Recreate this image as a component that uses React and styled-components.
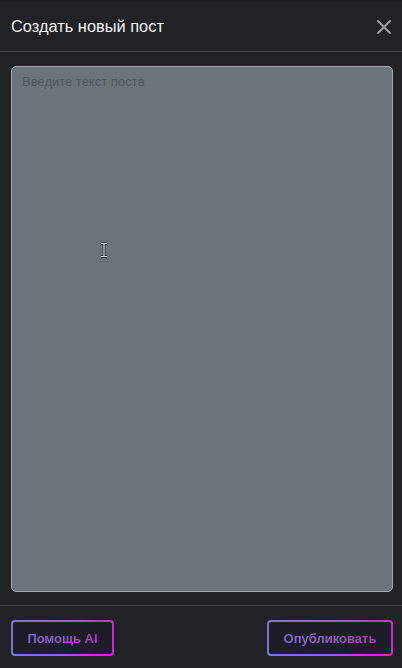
import React from "react";
import styled, { createGlobalStyle } from "styled-components";

const GlobalStyle = createGlobalStyle`
  html, body {
    margin: 0;
    padding: 0;
    background: #212226;
  }
  * {
    box-sizing: border-box;
  }
`;

const Modal = styled.div`
  width: 402px;
  height: 668px;
  display: flex;
  flex-direction: column;
  background: #212226;
  font-family: "Liberation Sans", Arial, sans-serif;
  border-top: 2px solid #1b1c1f;
`;

const Header = styled.div`
  height: 50px;
  display: flex;
  align-items: center;
  justify-content: space-between;
  padding: 0 8px 0 11px;
  border-bottom: 1px solid #4a4b50;
`;

const Title = styled.h2`
  margin: 0;
  font-size: 16.4px;
  font-weight: 400;
  color: #f2f2f2;
`;

const CloseButton = styled.button`
  width: 20px;
  height: 20px;
  padding: 0;
  border: none;
  background: transparent;
  display: flex;
  align-items: center;
  justify-content: center;
  cursor: pointer;
`;

const Body = styled.div`
  flex: 1;
  display: flex;
  padding: 14px 9px 13px 11px;
  position: relative;
`;

const TextArea = styled.textarea`
  flex: 1;
  resize: none;
  background: #6c737b;
  border: 1px solid #a3a8ae;
  border-radius: 5px;
  padding: 7px 10px;
  font-family: "Liberation Sans", Arial, sans-serif;
  font-size: 13px;
  color: #20242a;
  outline: none;

  &::placeholder {
    color: #50565e;
  }
`;

const Cursor = styled.svg`
  position: absolute;
  left: 100px;
  top: 190px;
  pointer-events: none;
`;

const Footer = styled.div`
  height: 63px;
  display: flex;
  align-items: flex-start;
  justify-content: space-between;
  padding: 14px 9px 0 11px;
  border-top: 1px solid #45464b;
`;

const GradientButton = styled.button`
  height: 36px;
  width: ${({ $w }) => $w}px;
  border: 2px solid transparent;
  border-radius: 4px;
  background:
    linear-gradient(#1d1c28, #1d1c28) padding-box,
    linear-gradient(90deg, #7c78d4 0%, #9a62d0 50%, #c52ec4 100%) border-box;
  display: flex;
  align-items: center;
  justify-content: center;
  cursor: pointer;
  padding: 0;
`;

const GradientText = styled.span`
  font-family: "Liberation Sans", Arial, sans-serif;
  font-size: 13px;
  font-weight: 700;
  background: linear-gradient(90deg, #7a6fcf 0%, #8e62c9 45%, #c22ec0 100%);
  -webkit-background-clip: text;
  background-clip: text;
  color: transparent;
`;

export default function App() {
  return (
    <>
      <GlobalStyle />
      <Modal>
        <Header>
          <Title>Создать новый пост</Title>
          <CloseButton aria-label="Закрыть">
            <svg width="16" height="16" viewBox="0 0 16 16">
              <path
                d="M2 2 L14 14 M14 2 L2 14"
                stroke="#a1a1a5"
                strokeWidth="1.8"
                strokeLinecap="round"
              />
            </svg>
          </CloseButton>
        </Header>
        <Body>
          <TextArea placeholder="Введите текст поста" />
          <Cursor width="8" height="16" viewBox="0 0 8 16">
            <path
              d="M1 1.5 H7 M4 1.5 V14.5 M1 14.5 H7"
              stroke="#1c1f24"
              strokeWidth="2.6"
              fill="none"
            />
            <path
              d="M1 1.5 H7 M4 1.5 V14.5 M1 14.5 H7"
              stroke="#d8dbe0"
              strokeWidth="1.2"
              fill="none"
            />
          </Cursor>
        </Body>
        <Footer>
          <GradientButton $w={103}>
            <GradientText>Помощь AI</GradientText>
          </GradientButton>
          <GradientButton $w={126}>
            <GradientText>Опубликовать</GradientText>
          </GradientButton>
        </Footer>
      </Modal>
    </>
  );
}
